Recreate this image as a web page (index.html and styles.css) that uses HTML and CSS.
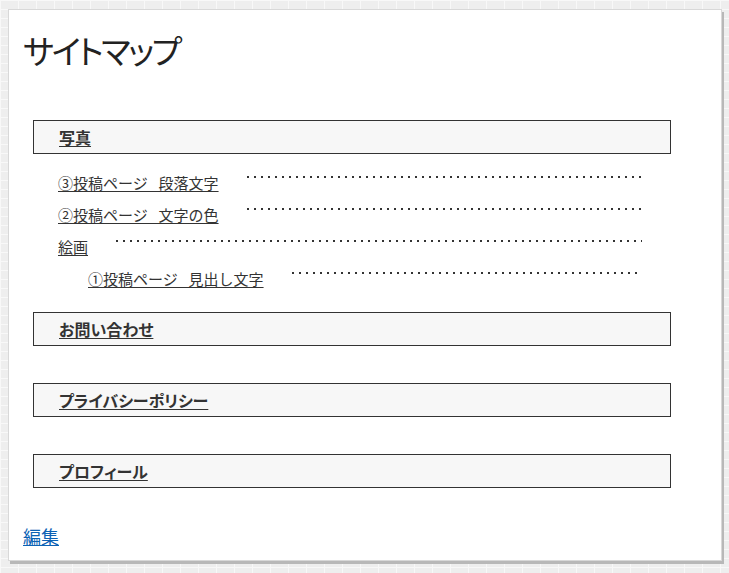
FILE: index.html
```html
<!DOCTYPE html>
<html lang="ja">
<head>
<meta charset="utf-8">
<title>サイトマップ</title>
<link rel="stylesheet" href="styles.css">
</head>
<body>
<div class="card">
  <h1 class="title">サイトマップ</h1>
  <ul class="sitemap">
    <li class="cat">
      <div class="cat-head"><a href="#">写真</a></div>
      <ul class="posts">
        <li class="post"><a href="#">③投稿ページ&ensp;&nbsp;段落文字</a><span class="dots"></span></li>
        <li class="post"><a href="#">②投稿ページ&ensp;&nbsp;文字の色</a><span class="dots"></span></li>
        <li class="post"><a href="#">絵画</a><span class="dots"></span></li>
        <li class="post sub"><a href="#">①投稿ページ&ensp;&nbsp;見出し文字</a><span class="dots"></span></li>
      </ul>
    </li>
    <li class="cat"><div class="cat-head"><a href="#">お問い合わせ</a></div></li>
    <li class="cat"><div class="cat-head"><a href="#">プライバシーポリシー</a></div></li>
    <li class="cat"><div class="cat-head"><a href="#">プロフィール</a></div></li>
  </ul>
  <a class="edit" href="#">編集</a>
</div>
</body>
</html>
```

FILE: styles.css
```css
html, body {
  margin: 0;
  padding: 0;
}
body {
  height: 573px;
  background-color: #eeeeee;
  background-image:
    linear-gradient(#f8f8f8 1px, transparent 1px),
    linear-gradient(90deg, #f8f8f8 1px, transparent 1px);
  background-size: 18px 9px, 18px 9px;
  font-family: "Noto Sans CJK JP", "Noto Sans", sans-serif;
  color: #333;
  padding-top: 9px;
  box-sizing: border-box;
}
.card {
  margin: 0 7px 0 8px;
  height: 552px;
  box-sizing: border-box;
  background: #fff;
  border: 1px solid #d8d8d8;
  box-shadow: 2px 3px 0 #b8b8b8;
  padding: 16px 0 0 14px;
}
.title {
  margin: 0;
  font-size: 33px;
  font-weight: normal;
  line-height: 48px;
  color: #222;
  font-feature-settings: "palt";
  letter-spacing: -2.5px;
}
.sitemap {
  list-style: none;
  margin: 46px 0 0 10px;
  padding: 0;
  width: 638px;
}
.cat {
  margin-bottom: 37px;
}
.cat:first-child {
  margin-bottom: 18px;
}
.cat-head {
  height: 32px;
  border: 1px solid #333;
  background: #f7f7f7;
  padding-left: 25px;
  display: flex;
  align-items: center;
}
.cat-head a {
  font-size: 16px;
  font-weight: bold;
  color: #333;
  text-decoration: underline;
  text-underline-offset: 2px;
  font-feature-settings: "palt";
}
.posts {
  list-style: none;
  margin: 12px 0 0 0;
  padding: 0 29px 0 25px;
}
.post {
  display: flex;
  align-items: center;
  height: 32px;
}
.post.sub {
  padding-left: 30px;
}
.post a {
  font-size: 15px;
  color: #333;
  text-decoration: underline;
  text-underline-offset: 2px;
  white-space: nowrap;
}
.dots {
  flex: 1;
  height: 2px;
  margin-left: 28px;
  margin-top: -10px;
  background-image: linear-gradient(90deg, #333 2px, transparent 2px);
  background-size: 7px 2px;
  background-repeat: repeat-x;
}
.edit {
  display: inline-block;
  margin-top: -9px;
  margin-left: 0;
  font-size: 18px;
  color: #0b62b4;
  text-decoration: underline;
}
```
